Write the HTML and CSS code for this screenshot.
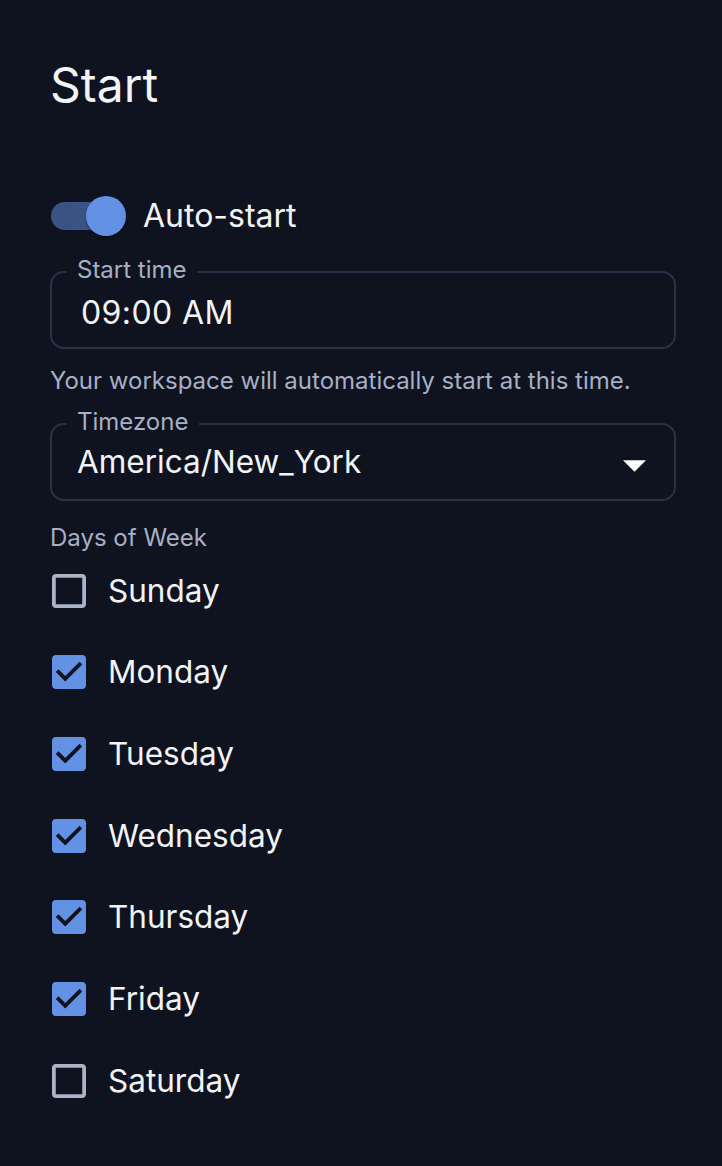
FILE: index.html
```html
<!DOCTYPE html>
<html lang="en">
<head>
<meta charset="utf-8">
<title>Start</title>
<link rel="stylesheet" href="styles.css">
</head>
<body>
<div class="panel">
  <h1 class="title">Start</h1>

  <div class="switch-row">
    <span class="switch">
      <span class="switch-track"></span>
      <span class="switch-thumb"></span>
    </span>
    <span class="switch-label">Auto-start</span>
  </div>

  <div class="field field-time">
    <span class="field-label">Start time</span>
    <span class="field-value">09:00 AM</span>
  </div>
  <p class="helper">Your workspace will automatically start at this time.</p>

  <div class="field field-select">
    <span class="field-label">Timezone</span>
    <span class="field-value">America/New_York</span>
    <svg class="caret" viewBox="0 0 24 12" width="24" height="12"><polygon points="0,0 24,0 12,12" fill="#ffffff"/></svg>
  </div>

  <div class="group-label">Days of Week</div>
  <ul class="days">
    <li class="day"><svg class="box" viewBox="3 3 18 18" width="34" height="34"><path fill="#aab4c8" d="M19 5v14H5V5h14m0-2H5c-1.1 0-2 .9-2 2v14c0 1.1.9 2 2 2h14c1.1 0 2-.9 2-2V5c0-1.1-.9-2-2-2z"/></svg><span class="day-name">Sunday</span></li>
    <li class="day"><svg class="box" viewBox="3 3 18 18" width="34" height="34"><path fill="#6392e5" d="M19 3H5c-1.11 0-2 .9-2 2v14c0 1.1.89 2 2 2h14c1.11 0 2-.9 2-2V5c0-1.1-.89-2-2-2zm-9 14l-5-5 1.41-1.41L10 14.170l7.59-7.59L19 8l-9 9z"/></svg><span class="day-name">Monday</span></li>
    <li class="day"><svg class="box" viewBox="3 3 18 18" width="34" height="34"><path fill="#6392e5" d="M19 3H5c-1.11 0-2 .9-2 2v14c0 1.1.89 2 2 2h14c1.11 0 2-.9 2-2V5c0-1.1-.89-2-2-2zm-9 14l-5-5 1.41-1.41L10 14.17l7.59-7.59L19 8l-9 9z"/></svg><span class="day-name">Tuesday</span></li>
    <li class="day"><svg class="box" viewBox="3 3 18 18" width="34" height="34"><path fill="#6392e5" d="M19 3H5c-1.11 0-2 .9-2 2v14c0 1.1.89 2 2 2h14c1.11 0 2-.9 2-2V5c0-1.1-.89-2-2-2zm-9 14l-5-5 1.41-1.41L10 14.17l7.59-7.59L19 8l-9 9z"/></svg><span class="day-name">Wednesday</span></li>
    <li class="day"><svg class="box" viewBox="3 3 18 18" width="34" height="34"><path fill="#6392e5" d="M19 3H5c-1.11 0-2 .9-2 2v14c0 1.1.89 2 2 2h14c1.11 0 2-.9 2-2V5c0-1.1-.89-2-2-2zm-9 14l-5-5 1.41-1.41L10 14.17l7.59-7.59L19 8l-9 9z"/></svg><span class="day-name">Thursday</span></li>
    <li class="day"><svg class="box" viewBox="3 3 18 18" width="34" height="34"><path fill="#6392e5" d="M19 3H5c-1.11 0-2 .9-2 2v14c0 1.1.89 2 2 2h14c1.11 0 2-.9 2-2V5c0-1.1-.89-2-2-2zm-9 14l-5-5 1.41-1.41L10 14.17l7.59-7.59L19 8l-9 9z"/></svg><span class="day-name">Friday</span></li>
    <li class="day"><svg class="box" viewBox="3 3 18 18" width="34" height="34"><path fill="#aab4c8" d="M19 5v14H5V5h14m0-2H5c-1.1 0-2 .9-2 2v14c0 1.1.9 2 2 2h14c1.1 0 2-.9 2-2V5c0-1.1-.9-2-2-2z"/></svg><span class="day-name">Saturday</span></li>
  </ul>
</div>
</body>
</html>
```

FILE: styles.css
```css
* { box-sizing: border-box; }

html, body {
  margin: 0;
  padding: 0;
  background: #0e131f;
}

body {
  font-family: "Inter", "Noto Sans", "Liberation Sans", sans-serif;
  color: #f2f4f8;
  min-height: 1166px;
}

.panel {
  width: 676px;
  padding: 56px 0 0 50px;
}

.title {
  margin: 0;
  font-size: 48px;
  line-height: 58px;
  font-weight: 400;
  color: #f2f4f8;
}

.switch-row {
  margin-top: 82px;
  height: 40px;
  display: flex;
  align-items: center;
  gap: 17px;
}

.switch {
  position: relative;
  width: 75px;
  height: 40px;
  margin-left: 1px;
  display: block;
}

.switch-track {
  display: block;
  width: 68px;
  height: 28px;
  margin-top: 6px;
  border-radius: 14px;
  background: #3b5383;
}

.switch-thumb {
  position: absolute;
  top: 0;
  right: 0;
  width: 40px;
  height: 40px;
  border-radius: 50%;
  background: #6392e5;
  box-shadow: 0 2px 2px rgba(0, 0, 0, 0.35);
}

.switch-label {
  font-size: 32px;
  line-height: 40px;
}

.field {
  position: relative;
  height: 78px;
  border: 2px solid #283249;
  border-radius: 14px;
  display: flex;
  align-items: center;
}

.field-time {
  margin-top: 35px;
  padding-left: 29px;
}

.field-select {
  margin-top: 27px;
  padding-left: 25px;
  padding-right: 28px;
  justify-content: space-between;
}

.field-label {
  position: absolute;
  top: -15px;
  left: 14px;
  padding: 0 11px;
  background: #0e131f;
  font-size: 24px;
  line-height: 24px;
  color: #a6b0c5;
}

.field-value {
  font-size: 31.5px;
  line-height: 40px;
  color: #f2f4f8;
}

.field-time .field-value {
  margin-top: 6px;
  font-size: 32px;
  letter-spacing: 0.4px;
}

.caret {
  display: block;
  width: 23px;
  height: 12px;
  margin-top: 8px;
}

.helper {
  margin: 17px 0 0;
  font-size: 24px;
  line-height: 30px;
  color: #a6b0c5;
}

.group-label {
  margin-top: 25px;
  font-size: 24px;
  line-height: 24px;
  color: #a6b0c5;
}

.days {
  list-style: none;
  margin: 0;
  padding: 0;
}

.day {
  height: 81.67px;
  display: flex;
  align-items: center;
  gap: 22px;
}

.box {
  display: block;
  flex: none;
  margin-left: 2px;
}

.day-name {
  font-size: 31.5px;
  line-height: 40px;
  color: #f2f4f8;
}
```
